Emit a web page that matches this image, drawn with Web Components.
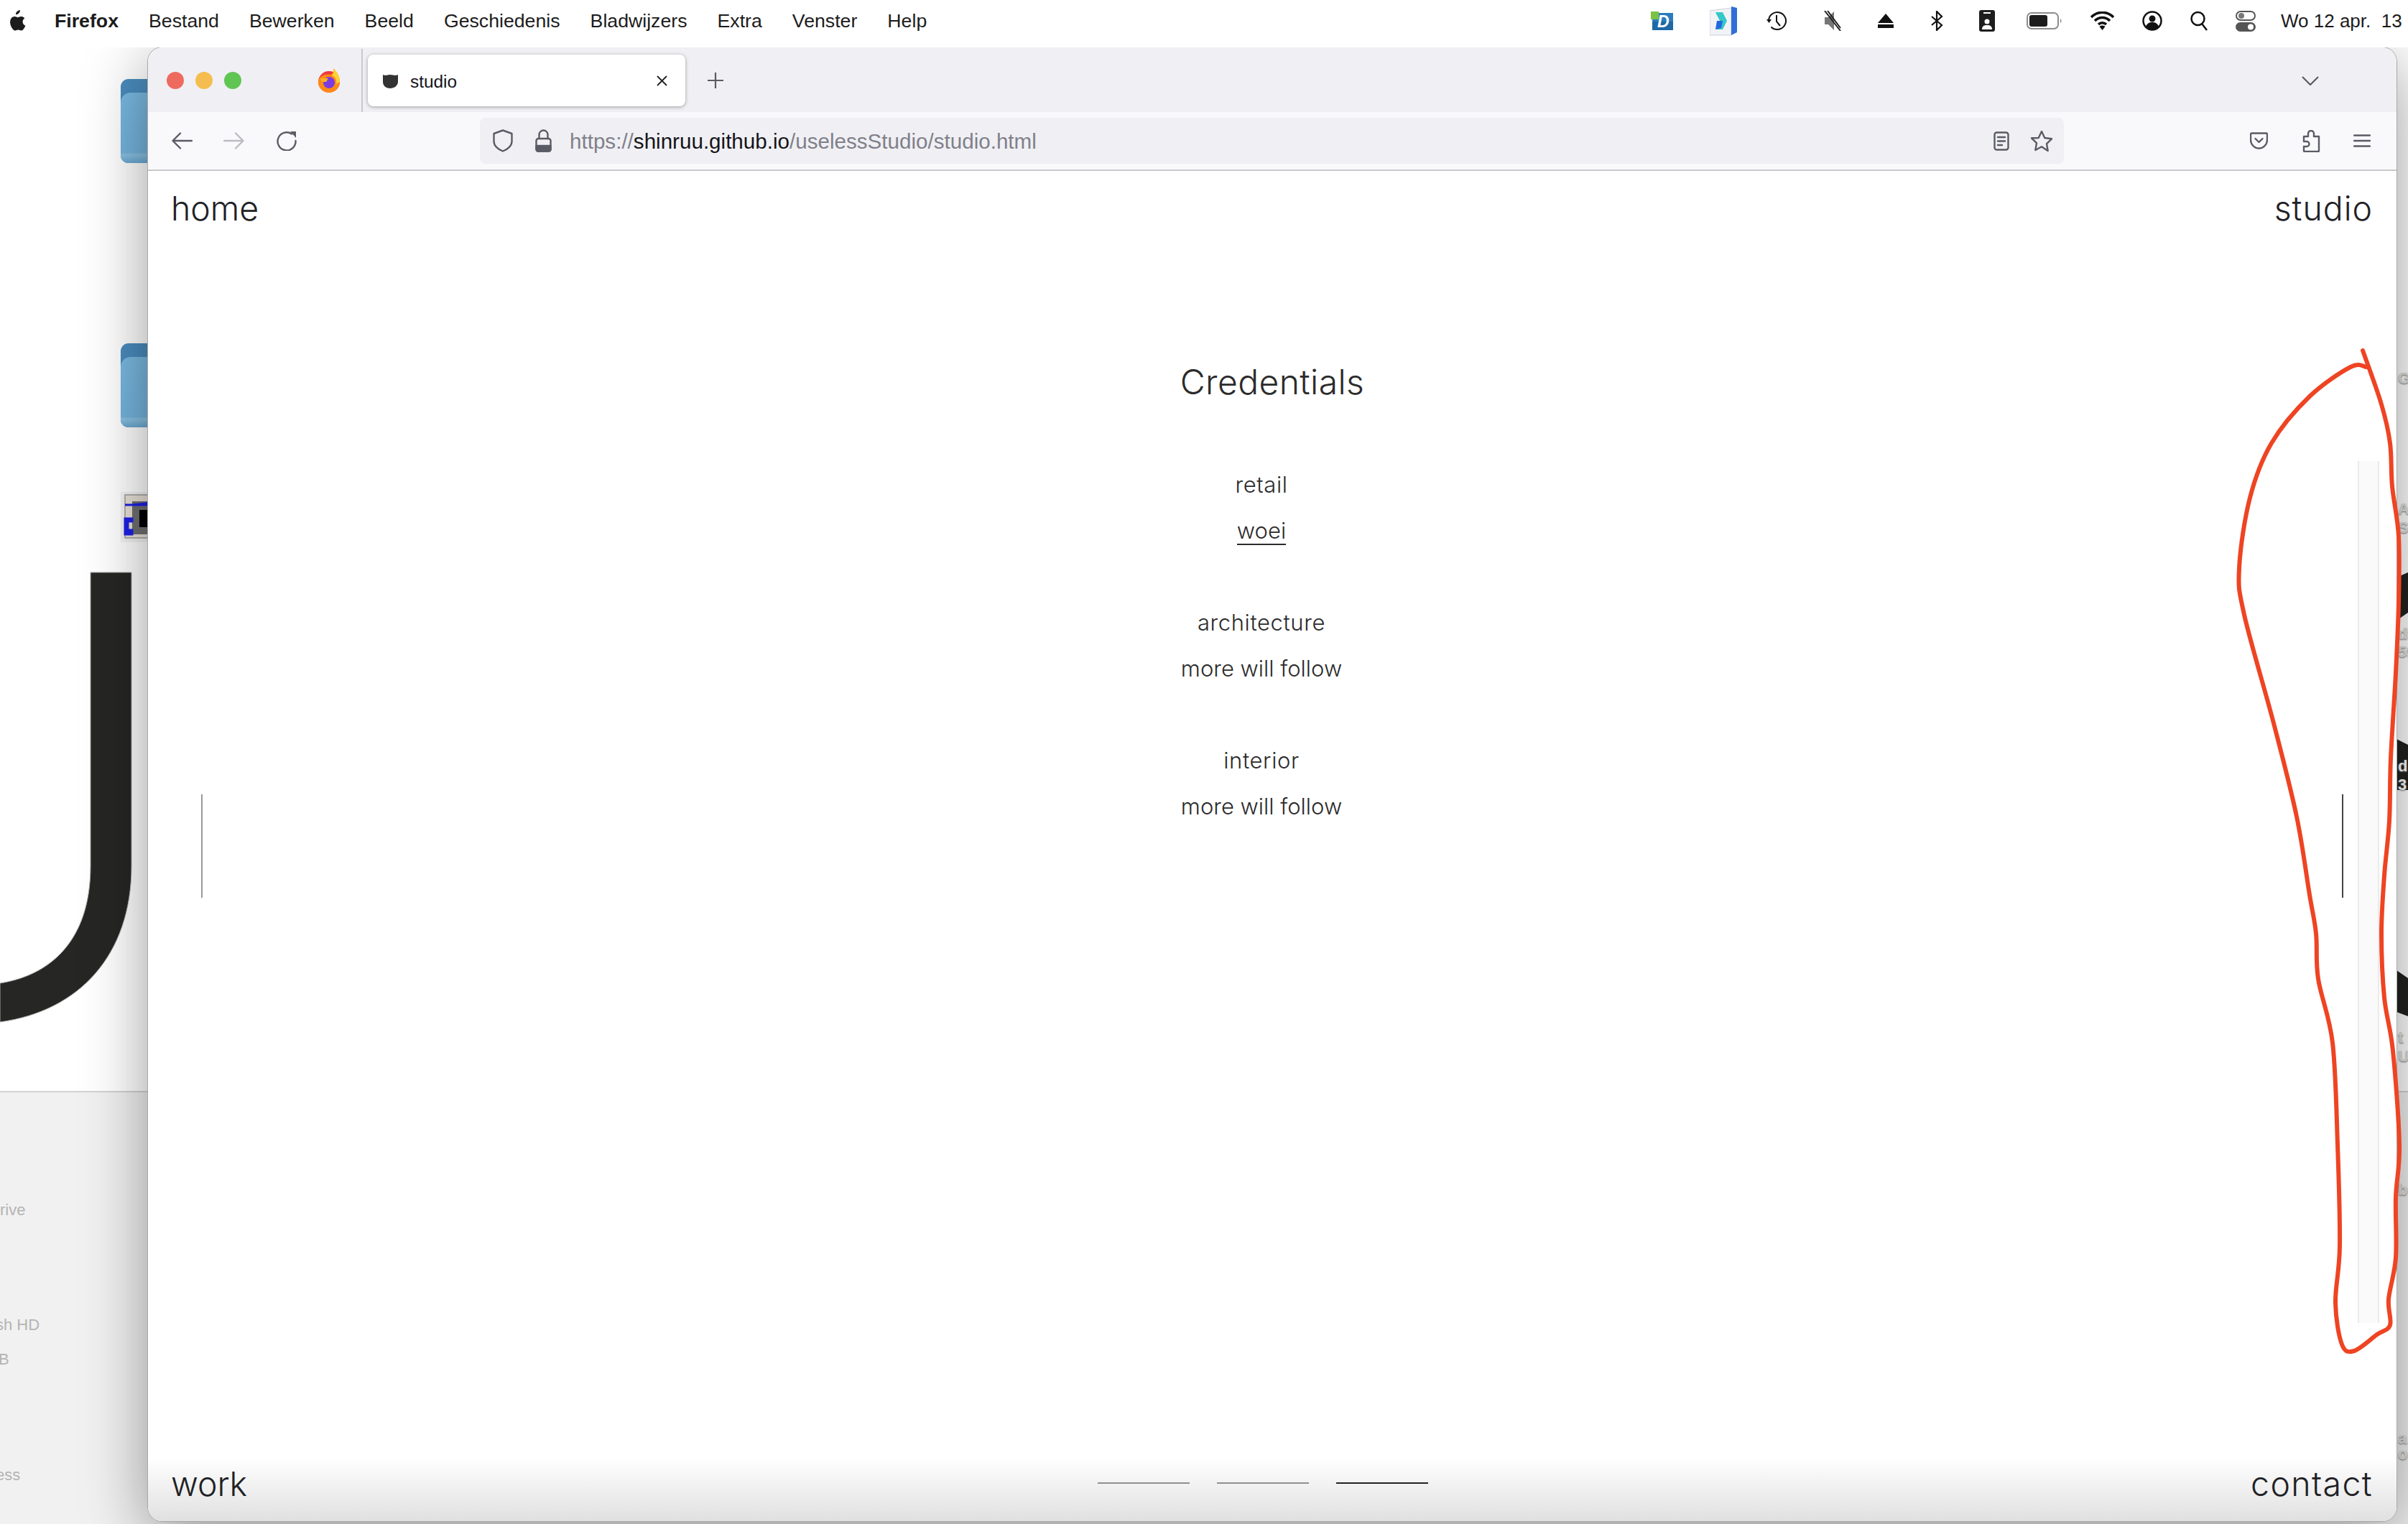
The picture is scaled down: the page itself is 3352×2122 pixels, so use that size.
<!DOCTYPE html>
<html lang="nl">
<head>
<meta charset="utf-8">
<title>studio</title>
<style>
  html, body { margin: 0; padding: 0; background: #fff; }
  body { width: 3352px; height: 2122px; overflow: hidden; position: relative; font-family: "Liberation Sans", sans-serif; }
</style>
</head>
<body>
<mac-desktop></mac-desktop>
<mac-menubar></mac-menubar>
<browser-window>
  <browser-tabstrip></browser-tabstrip>
  <browser-navbar></browser-navbar>
  <studio-page>
    <credential-group label="retail"><a-link>woei</a-link></credential-group>
    <credential-group label="architecture">more will follow</credential-group>
    <credential-group label="interior">more will follow</credential-group>
  </studio-page>
</browser-window>
<red-scribble></red-scribble>

<script>
class MacDesktop extends HTMLElement {
  connectedCallback() {
    this.attachShadow({ mode: "open" });
    this.shadowRoot.innerHTML = /* HTML */ `
      <style>
        :host { position: absolute; inset: 0; display: block; background: #fff; overflow: hidden; }
        .lower { position: absolute; left: 0; right: 0; top: 1519px; bottom: 0; background: #f1f1f1; border-top: 2px solid #d2d2d2; }
        svg { position: absolute; left: 0; top: 0; }
        .lbl { position: absolute; font: 22px "Liberation Sans", sans-serif; color: #b4b4b4; white-space: nowrap; }
        .r { left: 3338px; font-weight: 700; color: #e2e2e2; text-shadow: 0 1px 2px #777; }
      </style>
      <div class="lower"></div>
      <svg width="3352" height="2122" viewBox="0 0 3352 2122">
        <defs>
          <linearGradient id="ff" x1="0" y1="0" x2="0" y2="1"><stop offset="0" stop-color="#7abae2"/><stop offset=".85" stop-color="#74b4dd"/><stop offset=".88" stop-color="#8cc2e4"/><stop offset="1" stop-color="#6aa8d2"/></linearGradient>
          <g id="folder">
            <rect x="168" y="0" width="60" height="117" rx="11" fill="#4a8cbe"/>
            <path d="M168 33a14 14 0 0 1 14-14h46v98h-50a10 10 0 0 1-10-10z" fill="url(#ff)"/>
          </g>
        </defs>
        <use href="#folder" y="110"/>
        <use href="#folder" y="478"/>
        <rect x="168" y="685" width="50" height="70" fill="#f3f3f3"/>
        <rect x="174" y="689" width="40" height="60" fill="#e9e2d8" stroke="#777" stroke-width="1"/>
        <rect x="184" y="698" width="30" height="46" fill="#707070"/>
        <rect x="194" y="710" width="14" height="24" fill="#000"/>
        <path d="M174 703h32v-4M174 722h10v4h-6v12h6v6h-10z" fill="#1d20e8" stroke="#1d20e8" stroke-width="3"/>
        <path d="M126 797H183V1206C183 1330 110 1408 0 1423V1369C70 1358 126 1310 126 1206Z" fill="#262624" stroke="#aaa" stroke-width="1"/>
        <path d="M3336 804L3352 797V853L3336 864Z" fill="#22221f"/>
        <path d="M3336 1029L3352 1037V1100H3336Z" fill="#22221f"/>
        <path d="M3336 1351L3352 1362V1415L3336 1409Z" fill="#22221f"/>
      </svg>
      <span class="lbl" style="left:0;top:1672px">rive</span>
      <span class="lbl" style="left:-6px;top:1832px">sh HD</span>
      <span class="lbl" style="left:-2px;top:1880px">B</span>
      <span class="lbl" style="left:-6px;top:2041px">ess</span>
      <span class="lbl r" style="top:514px">GE</span>
      <span class="lbl r" style="top:696px">Ar</span>
      <span class="lbl r" style="top:722px">SY</span>
      <span class="lbl r" style="top:870px">di</span>
      <span class="lbl r" style="top:895px">59</span>
      <span class="lbl r" style="top:1054px;color:#fff">di</span>
      <span class="lbl r" style="top:1080px;color:#fff">3</span>
      <span class="lbl r" style="top:1432px">t</span>
      <span class="lbl r" style="top:1458px">US</span>
      <span class="lbl r" style="top:1644px">b</span>
      <span class="lbl r" style="top:1990px">a</span>
      <span class="lbl r" style="top:2012px">o</span>
    `;
  }
}

class MacMenubar extends HTMLElement {
  connectedCallback() {
    this.attachShadow({ mode: "open" });
    const items = ["Bestand", "Bewerken", "Beeld", "Geschiedenis", "Bladwijzers", "Extra", "Venster", "Help"];
    this.shadowRoot.innerHTML = /* HTML */ `
      <style>
        :host { position: relative; z-index: 3; display: flex; align-items: center; box-sizing: border-box; height: 66px; padding: 0 0 8px 10px; background: #fff; color: #1c1c1c; font: 26.7px "Liberation Sans", sans-serif; white-space: pre; overflow: hidden; }
        .apple { width: 26px; height: 31px; margin-right: 40px; }
        b { margin-right: 42px; }
        span { margin-right: 42px; }
        .right { margin-left: auto; display: flex; align-items: center; height: 100%; width: 1054px; flex: none; }
        .right svg { flex: none; display: block; }
        .time { margin: 0 0 0 35px; font-size: 26px; }
      </style>
      <svg class="apple" viewBox="0 0 26 31"><path fill="#1c1c1c" d="M18 0c.2 3-2.800 6.500-6 6.200C11.700 3.200 15 .2 18 0zM21.600 16.400c0-3.200 2.600-4.700 2.800-4.800-1.500-2.200-3.900-2.600-4.700-2.600-2-.2-3.900 1.200-4.900 1.200s-2.600-1.200-4.300-1.100C8.300 9.100 6.300 10.300 5.200 12.200c-2.300 4-.6 9.900 1.700 13.100 1.100 1.600 2.400 3.400 4.100 3.300 1.600-.1 2.300-1.100 4.300-1.100s2.500 1.100 4.300 1c1.800 0 2.900-1.600 4-3.200 1.300-1.800 1.800-3.600 1.800-3.700-.1 0-3.800-1.400-3.800-5.200z"/></svg>
      <b>Firefox</b>
      ${items.map((t) => `<span>${t}</span>`).join("")}
      <div class="right">
        <svg width="31" height="26" viewBox="0 0 31 26"><rect x="2" y="2" width="29" height="24" fill="#2a7cbf"/><rect x="2" y="14" width="29" height="12" fill="#1f68a6"/><rect width="11" height="11" fill="#7cc243"/><text x="9" y="22" font-family="Liberation Sans" font-size="23" font-style="italic" font-weight="700" fill="#fff">D</text></svg>
        <svg width="38" height="41" style="margin-left:51px" viewBox="0 0 38 41"><path d="M0 6L30 2V40H0Z" fill="#f2f3f6" stroke="#ccd" stroke-width="1"/><path d="M30 0L38 2V36L30 40Z" fill="#2f6fd6"/><path d="M8 8h10l6 12-6 12H8l6-12z" fill="#35c8c8"/><path d="M10 20h8l-2 10-8 2z" fill="#2467e0"/></svg>
        <svg width="28" height="28" style="margin-left:41px" viewBox="0 0 28 28" fill="none" stroke="#111" stroke-width="2"><path d="M3 14a12 12 0 1 1 3.500 8.500"/><path d="M14 6v9l5 6"/><path d="M0 12h7l-3.500 5z" fill="#111" stroke="none"/></svg>
        <svg width="26" height="28" style="margin-left:51px" viewBox="0 0 26 28"><path d="M2 9h5l8-8v26l-8-8H2z" fill="#777"/><path d="M2 0l22 28M6 0l18 24" stroke="#222" stroke-width="2" fill="none"/></svg>
        <svg width="22" height="20" style="margin-left:50px" viewBox="0 0 22 20"><path d="M11 0l11 13H0z M0 15h22v5H0z" fill="#111"/></svg>
        <svg width="18" height="28" style="margin-left:51px" viewBox="0 0 18 28" fill="none" stroke="#111" stroke-width="2.200"><path d="M2 8l14 12-7 7V1l7 7L2 20"/></svg>
        <svg width="22" height="30" style="margin-left:50px" viewBox="0 0 22 30"><rect width="22" height="30" rx="3" fill="#1d1d1d"/><rect x="6" y="3" width="10" height="2" fill="#fff"/><circle cx="11" cy="16" r="3.500" fill="#fff"/><path d="M4 27c0-5 3-6 7-6s7 1 7 6z" fill="#fff"/></svg>
        <svg width="49" height="24" style="margin-left:44px" viewBox="0 0 49 24"><rect x="1" y="1" width="43" height="22" rx="6" fill="none" stroke="#8d8d8d" stroke-width="2"/><rect x="4" y="4" width="25" height="16" rx="3" fill="#1c1c1c"/><path d="M47 9c2 1 2 5 0 6z" fill="#8d8d8d"/></svg>
        <svg width="35" height="26" style="margin-left:39px" viewBox="0 0 35 26"><path d="M2 8c9-9 22-9 31 0M7 13c6-6 15-6 21 0M12 18c3-3 8-3 11 0" fill="none" stroke="#111" stroke-width="3.500"/><path d="M17.500 26l-4-5c2-2 6-2 8 0z" fill="#111"/></svg>
        <svg width="28" height="28" style="margin-left:38px" viewBox="0 0 28 28"><circle cx="14" cy="14" r="12.500" fill="#fff" stroke="#111" stroke-width="2.500"/><circle cx="14" cy="11" r="4.500" fill="#111"/><path d="M5 22c2-5 5-6 9-6s7 1 9 6c-5 6-13 6-18 0z" fill="#111"/></svg>
        <svg width="25" height="28" style="margin-left:39px" viewBox="0 0 25 28" fill="none" stroke="#111" stroke-width="2.500"><circle cx="10.500" cy="11" r="9"/><path d="M16 18l7 9"/></svg>
        <svg width="28" height="29" style="margin-left:38px" viewBox="0 0 28 29"><rect x="1" y="1" width="26" height="12" rx="6" fill="#fff" stroke="#555" stroke-width="2"/><circle cx="8" cy="7" r="4" fill="#777"/><rect y="16" width="28" height="13" rx="6.500" fill="#555"/><circle cx="21" cy="22.500" r="4" fill="#fff"/></svg>
        <span class="time">Wo 12 apr.  13</span>
      </div>
    `;
  }
}

class BrowserWindow extends HTMLElement {
  connectedCallback() {
    this.attachShadow({ mode: "open" });
    this.shadowRoot.innerHTML = /* HTML */ `
      <style>
        :host { position: absolute; z-index: 1; left: 206px; top: 66px; width: 3130px; height: 2052px; display: flex; flex-direction: column; background: #fff; border-radius: 20px; box-shadow: 0 0 0 1px #a8a8a8, 0 20px 90px rgba(0,0,0,.4); overflow: hidden; }
        ::slotted(studio-page) { flex: 1; min-height: 0; }
      </style>
      <slot></slot>
    `;
  }
}

class BrowserTabstrip extends HTMLElement {
  connectedCallback() {
    this.attachShadow({ mode: "open" });
    this.shadowRoot.innerHTML = /* HTML */ `
      <style>
        :host { display: flex; align-items: stretch; height: 90px; box-sizing: border-box; padding-top: 2px; background: #f0f0f4; font: 24.400px "Liberation Sans", sans-serif; color: #15141a; }
        .lights { display: flex; align-items: center; gap: 16px; padding-left: 26px; }
        .lights i { width: 24px; height: 24px; border-radius: 50%; }
        .ff { align-self: center; width: 32px; height: 34px; margin-left: 106px; }
        .sep { width: 2px; background: #c9c9cd; margin-left: 29px; }
        .tab { display: flex; align-items: center; box-sizing: border-box; width: 442px; height: 72px; margin: 8px 0 0 7px; padding: 0 25px 0 20px; background: #fff; border-radius: 8px; box-shadow: 0 1px 5px rgba(0,0,0,.35); }
        .tab svg.fav { width: 23px; height: 21px; margin-right: 16px; }
        .tab span { padding-top: 3px; }
        .tab .x { width: 15px; height: 15px; margin-left: auto; }
        .plus { align-self: center; width: 22px; height: 22px; margin-left: 31px; }
        .chev { align-self: center; width: 24px; height: 13px; margin-left: auto; margin-right: 108px; }
      </style>
      <div class="lights"><i style="background:#ee6a5e"></i><i style="background:#f5bd4f"></i><i style="background:#61c554"></i></div>
      <svg class="ff" viewBox="0 0 32 34">
        <circle cx="16" cy="19" r="15" fill="#f0393f"/>
        <path d="M1 19a15 15 0 0 0 30 0c0-8-4-14-9-19 1 5-1 8-4 9-4-1-9 0-12 2-3 2-5 4-5 8z" fill="#ff8a16"/>
        <path d="M31 19c0-8-4-14-9-19 1 5 0 8-2 10 5 2 7 7 6 12z" fill="#ffd234"/>
        <circle cx="16" cy="20" r="8" fill="#7b3be0"/>
        <path d="M4 14h11l-3 5H6z" fill="#ffb020"/>
      </svg>
      <div class="sep"></div>
      <div class="tab">
        <svg class="fav" viewBox="0 0 23 21"><path d="M1 2c5 2 5 0 10 0s6 2 11 0v10c0 5-5 9-11 9S1 17 1 12z" fill="#333"/></svg>
        <span>studio</span>
        <svg class="x" viewBox="0 0 15 15"><path d="M1 1l13 13M14 1L1 14" stroke="#222" stroke-width="1.800"/></svg>
      </div>
      <svg class="plus" viewBox="0 0 22 22"><path d="M11 0v22M0 11h22" stroke="#5b5b66" stroke-width="2.200"/></svg>
      <svg class="chev" viewBox="0 0 24 13"><path d="M1 1l11 11L23 1" fill="none" stroke="#5b5b66" stroke-width="2.200"/></svg>
    `;
  }
}

class BrowserNavbar extends HTMLElement {
  connectedCallback() {
    this.attachShadow({ mode: "open" });
    this.shadowRoot.innerHTML = /* HTML */ `
      <style>
        :host { display: flex; align-items: center; height: 82px; box-sizing: border-box; border-bottom: 2px solid #c9c9cb; background: #f9f9fb; }
        svg { flex: none; display: block; fill: none; stroke: #5b5b66; stroke-width: 2.400; stroke-linejoin: round; stroke-linecap: round; }
        .back { margin-left: 33px; }
        .fwd { margin-left: 43px; stroke: #bcbcc2; }
        .reload { margin-left: 45px; }
        .bar { display: flex; align-items: center; box-sizing: border-box; width: 2205px; height: 64px; margin-left: 255px; padding-left: 18px; background: #f0f0f4; border-radius: 8px; }
        .url { margin: 2px 0 0 25px; font: 29.600px "Liberation Sans", sans-serif; color: #80808a; white-space: nowrap; }
        .url b { font-weight: 400; color: #15141a; }
        .lock { margin-left: 31px; }
        .reader { margin-left: auto; }
        .star { margin: 0 15px 0 29px; }
        .pocket { margin-left: 259px; }
        .ext { margin-left: 48px; }
        .menu { margin-left: 46px; }
      </style>
      <svg class="back" width="29" height="24" viewBox="0 0 29 24"><path d="M28 12H2M12 1.500L1.500 12 12 22.500"/></svg>
      <svg class="fwd" width="29" height="24" viewBox="0 0 29 24"><path d="M1 12h26M17 1.500L27.500 12 17 22.500"/></svg>
      <svg class="reload" width="28" height="28" viewBox="0 0 28 28"><path d="M21 4.500A12.500 12.500 0 1 0 26.500 14"/><path d="M19 1l8 0 0 9z" fill="#5b5b66" stroke="none"/></svg>
      <div class="bar">
        <svg width="28" height="32" viewBox="0 0 28 32"><path d="M14 1.500L26.500 6v11c0 6-6 11-12.500 13.500C7.500 28 1.500 23 1.500 17V6z"/></svg>
        <svg class="lock" width="23" height="32" viewBox="0 0 23 32"><rect x="1.500" y="13" width="20" height="17.500" rx="3"/><path d="M5.500 13V7.500a6 6 0 0 1 12 0V13"/><path d="M1.500 23h20v5a2.500 2.500 0 0 1-2.500 2.500H4A2.500 2.500 0 0 1 1.500 28z" fill="#5b5b66"/></svg>
        <span class="url">https://<b>shinruu.github.io</b>/uselessStudio/studio.html</span>
        <svg class="reader" width="22" height="27" viewBox="0 0 22 27"><rect x="1.500" y="1.500" width="19" height="24" rx="3"/><path d="M6 8h10M6 13.500h10M6 19h6"/></svg>
        <svg class="star" width="32" height="30" viewBox="0 0 32 30"><path d="M16 2l4.300 9 9.700 1.300-7 6.900 1.700 9.800L16 23.300 7.300 28l1.700-9.800-7-6.900L11.700 11z"/></svg>
      </div>
      <svg class="pocket" width="25" height="24" viewBox="0 0 25 24"><path d="M2.500 1.500h20a1.500 1.500 0 0 1 1.500 1.500v8c0 6-5 11.500-11.500 11.500S1 17 1 11V3a1.500 1.500 0 0 1 1.500-1.500z"/><path d="M7.500 9l5 5 5-5"/></svg>
      <svg class="ext" width="25" height="31" viewBox="0 0 25 31"><path d="M2 9h6V5a4 4 0 0 1 8 0v4h7v20a1 1 0 0 1-1 1H3a1 1 0 0 1-1-1v-6h4a3.500 3.500 0 0 0 0-7H2z"/></svg>
      <svg class="menu" width="24" height="18" viewBox="0 0 24 18"><path d="M1 1.500h22M1 9h22M1 16.500h22"/></svg>
    `;
  }
}

class StudioPage extends HTMLElement {
  connectedCallback() {
    this.attachShadow({ mode: "open" });
    this.shadowRoot.innerHTML = /* HTML */ `
      <style>
        :host { display: flex; flex-direction: column; background: #fff; color: #2b2b2b; font: 300 46px Inter, sans-serif; }
        header { display: flex; justify-content: space-between; box-sizing: border-box; padding: 4px 33px 0 32px; height: 96px; line-height: 96px; color: #1f2226; font-size: 46.400px; }
        main { flex: 1; min-height: 0; display: grid; grid-template-columns: 2px 1fr 2px; padding: 0 74px; }
        .rail { height: 144px; margin-top: 772px; }
        .rail.l { background: #999; }
        .rail.r { background: #444; }
        .col { display: flex; flex-direction: column; align-items: center; }
        h1 { margin: 168px 0 81px; font-size: 48px; font-weight: 300; line-height: 60px; letter-spacing: .4px; }
        .list { display: flex; flex-direction: column; gap: 64px; margin-right: 30px; }
        footer { display: grid; grid-template-columns: 1fr auto 1fr; height: 88px; padding: 0 33px 0 32px; background: linear-gradient(rgba(224,224,224,0), #e0e0e0); color: #1f2226; font-size: 46.400px; line-height: 72px; }
        footer span:last-child { text-align: right; letter-spacing: 1.400px; }
        header span:last-child { letter-spacing: 1px; }
        .bars { display: flex; gap: 38px; margin: 34px 26px 0 0; }
        .bars i { width: 128px; height: 2px; background: #8f8f8f; }
        .bars i:last-child { background: #222; }
      </style>
      <header><span>home</span><span>studio</span></header>
      <main>
        <div class="rail l"></div>
        <div class="col">
          <h1>Credentials</h1>
          <div class="list"><slot></slot></div>
        </div>
        <div class="rail r"></div>
      </main>
      <footer>
        <span>work</span>
        <div class="bars"><i></i><i></i><i></i></div>
        <span>contact</span>
      </footer>
    `;
  }
}

class CredentialGroup extends HTMLElement {
  connectedCallback() {
    this.attachShadow({ mode: "open" });
    this.shadowRoot.innerHTML = /* HTML */ `
      <style>
        :host { display: flex; flex-direction: column; align-items: center; font: 300 31px Inter, sans-serif; line-height: 64px; }
        .label { letter-spacing: .6px; }
      </style>
      <div class="label">${this.getAttribute("label")}</div>
      <div><slot></slot></div>
    `;
  }
}

class ALink extends HTMLElement {
  connectedCallback() {
    this.attachShadow({ mode: "open" });
    this.shadowRoot.innerHTML = /* HTML */ `
      <style>
        :host { display: inline; border-bottom: 2px solid #2b2b2b; padding-bottom: 0; }
      </style>
      <slot></slot>
    `;
  }
}

// overlay of the page: ghost scrollbar + the hand drawn red outline
class RedScribble extends HTMLElement {
  connectedCallback() {
    this.attachShadow({ mode: "open" });
    const pts = [[3289,488],[3315,563],[3327,617],[3330,677],[3339,747],[3339,839],[3335,937],[3328,1056],[3326,1143],[3319,1219],[3315,1300],[3319,1389],[3331,1463],[3340,1594],[3335,1667],[3335,1751],[3325,1809],[3327,1845],[3309,1858],[3277,1881],[3260,1872],[3251,1814],[3257,1735],[3254,1594],[3247,1452],[3227,1363],[3224,1300],[3215,1246],[3197,1137],[3165,1007],[3124,856],[3117,791],[3132,693],[3162,617],[3215,552],[3272,511],[3294,511]];
    let d = `M${pts[0]}`;
    for (let i = 0; i < pts.length - 1; i++) {
      const p0 = pts[i - 1] || pts[i], p1 = pts[i], p2 = pts[i + 1], p3 = pts[i + 2] || p2;
      d += `C${p1[0] + (p2[0] - p0[0]) / 6} ${p1[1] + (p2[1] - p0[1]) / 6} ${p2[0] - (p3[0] - p1[0]) / 6} ${p2[1] - (p3[1] - p1[1]) / 6} ${p2[0]} ${p2[1]}`;
    }
    this.shadowRoot.innerHTML = /* HTML */ `
      <style>
        :host { position: absolute; z-index: 2; inset: 0; display: block; pointer-events: none; }
        .ghost { position: absolute; left: 3282px; top: 642px; width: 30px; height: 1200px; box-sizing: border-box; background: #fafafa; border: solid #ebebeb; border-width: 0 2px; }
        svg { position: absolute; left: 0; top: 0; }
      </style>
      <div class="ghost"></div>
      <svg width="3352" height="2122" viewBox="0 0 3352 2122"><path d="${d}" fill="none" stroke="#ee4423" stroke-width="6" stroke-linecap="round" stroke-linejoin="round"/></svg>
    `;
  }
}

customElements.define("mac-desktop", MacDesktop);
customElements.define("mac-menubar", MacMenubar);
customElements.define("browser-window", BrowserWindow);
customElements.define("browser-tabstrip", BrowserTabstrip);
customElements.define("browser-navbar", BrowserNavbar);
customElements.define("studio-page", StudioPage);
customElements.define("credential-group", CredentialGroup);
customElements.define("a-link", ALink);
customElements.define("red-scribble", RedScribble);
</script>
</body>
</html>
